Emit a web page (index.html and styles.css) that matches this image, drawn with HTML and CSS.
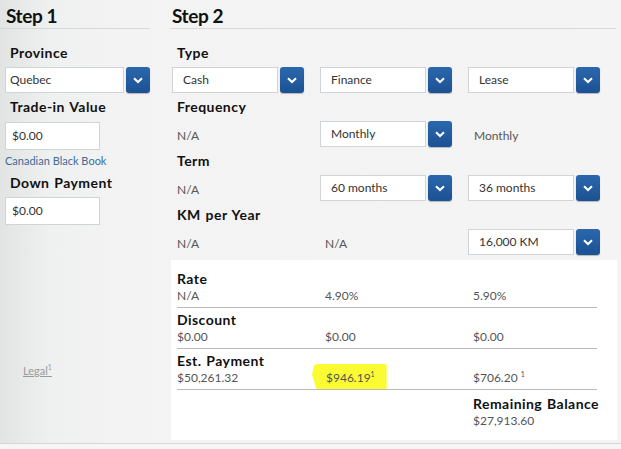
FILE: index.html
```html
<!DOCTYPE html>
<html lang="en">
<head>
  <meta charset="UTF-8">
  <meta name="viewport" content="width=device-width, initial-scale=1.0">
  <link rel="stylesheet" href="styles.css">
  <title>Payment Calculator</title>
</head>
<body>

<div id="calculator">
  <section class="step step-one">
    <h2 class="step-title">Step 1</h2>

    <div class="field-label first">Province</div>
    <div class="select wide">
      <span class="select-value">Quebec</span>
      <span class="select-btn"><svg width="10" height="7" viewBox="0 0 10 7"><path d="M1 1.2 5 5 9 1.2" fill="none" stroke="#fff" stroke-width="2"/></svg></span>
    </div>

    <div class="field-label">Trade-in Value</div>
    <div class="text-input">$0.00</div>
    <a class="book-link">Canadian Black Book</a>

    <div class="field-label down">Down Payment</div>
    <div class="text-input">$0.00</div>

    <a class="legal">Legal<sup>1</sup></a>
  </section>

  <section class="step step-two">
    <h2 class="step-title">Step 2</h2>

    <div class="field-label first">Type</div>
    <div class="opt-row">
      <div class="select"><span class="select-value">Cash</span><span class="select-btn"><svg width="10" height="7" viewBox="0 0 10 7"><path d="M1 1.2 5 5 9 1.2" fill="none" stroke="#fff" stroke-width="2"/></svg></span></div>
      <div class="select"><span class="select-value">Finance</span><span class="select-btn"><svg width="10" height="7" viewBox="0 0 10 7"><path d="M1 1.2 5 5 9 1.2" fill="none" stroke="#fff" stroke-width="2"/></svg></span></div>
      <div class="select"><span class="select-value">Lease</span><span class="select-btn"><svg width="10" height="7" viewBox="0 0 10 7"><path d="M1 1.2 5 5 9 1.2" fill="none" stroke="#fff" stroke-width="2"/></svg></span></div>
    </div>

    <div class="field-label">Frequency</div>
    <div class="opt-row">
      <div class="plain">N/A</div>
      <div class="select"><span class="select-value">Monthly</span><span class="select-btn"><svg width="10" height="7" viewBox="0 0 10 7"><path d="M1 1.2 5 5 9 1.2" fill="none" stroke="#fff" stroke-width="2"/></svg></span></div>
      <div class="plain shifted">Monthly</div>
    </div>

    <div class="field-label">Term</div>
    <div class="opt-row">
      <div class="plain">N/A</div>
      <div class="select"><span class="select-value">60 months</span><span class="select-btn"><svg width="10" height="7" viewBox="0 0 10 7"><path d="M1 1.2 5 5 9 1.2" fill="none" stroke="#fff" stroke-width="2"/></svg></span></div>
      <div class="select"><span class="select-value">36 months</span><span class="select-btn"><svg width="10" height="7" viewBox="0 0 10 7"><path d="M1 1.2 5 5 9 1.2" fill="none" stroke="#fff" stroke-width="2"/></svg></span></div>
    </div>

    <div class="field-label">KM per Year</div>
    <div class="opt-row">
      <div class="plain">N/A</div>
      <div class="plain">N/A</div>
      <div class="select"><span class="select-value">16,000 KM</span><span class="select-btn"><svg width="10" height="7" viewBox="0 0 10 7"><path d="M1 1.2 5 5 9 1.2" fill="none" stroke="#fff" stroke-width="2"/></svg></span></div>
    </div>

    <div class="results">
      <div class="result-row">
        <div class="result-label">Rate</div>
        <div class="result-values">
          <span>N/A</span><span>4.90%</span><span>5.90%</span>
        </div>
      </div>
      <div class="result-row">
        <div class="result-label">Discount</div>
        <div class="result-values">
          <span>$0.00</span><span>$0.00</span><span>$0.00</span>
        </div>
      </div>
      <div class="result-row">
        <div class="result-label">Est. Payment</div>
        <div class="result-values">
          <span>$50,261.32</span>
          <span><mark class="highlight">$946.19<sup>1</sup></mark></span>
          <span>$706.20 <sup>1</sup></span>
        </div>
      </div>
      <div class="result-row last">
        <div class="result-values">
          <span></span><span></span>
          <span><b class="result-label">Remaining Balance</b>$27,913.60</span>
        </div>
      </div>
    </div>
  </section>
</div>

</body>
</html>
```

FILE: styles.css
```css
body {
  margin: 0;
  font-family: 'Lato', 'Liberation Sans', sans-serif;
  background-color: #f6f6f6;
  color: #111;
}

#calculator {
  display: flex;
  height: 443px;
  border-bottom: 1px solid #d6d6d6;
  background: linear-gradient(to right, #e2e4e4 0, #eff0f0 50px, #f3f3f3 120px, #f4f4f4 100%);
}

.step-title {
  margin: 0;
  padding-top: 4px;
  height: 24px;
  line-height: 24px;
  font-size: 19px;
  font-weight: bold;
  letter-spacing: -0.4px;
  border-bottom: 1px solid #d8d8d8;
}

/* step 1 */

.step-one {
  width: 150px;
}

.step-one .step-title {
  padding-left: 6px;
}

.field-label {
  height: 28px;
  line-height: 28px;
  padding-left: 10px;
  font-size: 14px;
  font-weight: bold;
  letter-spacing: 0.45px;
  word-spacing: 1px;
}

.field-label.first {
  margin-top: 10px;
}

.select {
  display: flex;
  gap: 2px;
  width: 132px;
  height: 26px;
}

.select.wide {
  width: 145px;
  margin-left: 5px;
}

.select-value {
  flex: 1;
  background-color: #fff;
  border: 1px solid #cfd4d8;
  padding-left: 10px;
  font-size: 12px;
  line-height: 24px;
  color: #333;
}

.select.wide .select-value {
  padding-left: 4px;
}

.select-btn {
  width: 24px;
  display: flex;
  align-items: center;
  justify-content: center;
  border-radius: 3px;
  background: linear-gradient(#2b67ad, #1c5193);
  box-shadow: 0 1px 1px rgba(0, 0, 0, 0.25);
}

.text-input {
  width: 87px;
  height: 26px;
  margin: 1px 0 0 5px;
  padding-left: 6px;
  background-color: #fff;
  border: 1px solid #cfd4d8;
  font-size: 12px;
  line-height: 26px;
  color: #333;
}

.book-link {
  display: block;
  margin: 2px 0 0 5px;
  font-size: 11px;
  line-height: 18px;
  color: #3f6c98;
}

.field-label.down {
  height: 26px;
  line-height: 26px;
}

.legal {
  display: block;
  margin: 135px 0 0 23px;
  font-size: 11px;
  line-height: 14px;
  color: #999;
  text-decoration: underline;
}

.legal sup {
  font-size: 7px;
}

/* step 2 */

.step-two {
  margin-left: 20px;
  width: 446px;
}

.step-two .step-title {
  padding-left: 2px;
}

.step-two .field-label {
  padding-left: 7px;
}

.opt-row {
  display: grid;
  grid-template-columns: repeat(3, 148px);
  height: 26px;
  padding-left: 2px;
}

.plain {
  padding-left: 5px;
  font-size: 12px;
  line-height: 30px;
  color: #555;
}

.plain.shifted {
  padding-left: 6px;
}

.results {
  position: relative;
  z-index: 0;
  margin: 5px 0 0 1px;
  width: 440px;
  height: 173px;
  padding: 7px 0 0 6px;
  background-color: #fff;
}

.result-row {
  width: 420px;
  padding: 3px 0;
  border-bottom: 1px solid #bbb;
}

.result-row.last {
  border-bottom: none;
  padding-top: 5px;
}

.result-label {
  display: block;
  font-size: 14px;
  font-weight: bold;
  line-height: 18px;
  letter-spacing: 0.45px;
  word-spacing: 1px;
  color: #111;
}

.result-values {
  display: grid;
  grid-template-columns: repeat(3, 148px);
  font-size: 12px;
  line-height: 16px;
  color: #555;
}

.result-values sup {
  font-size: 7px;
  vertical-align: 5px;
  line-height: 0;
}

.highlight {
  position: relative;
  margin-left: 1px;
  background: none;
  color: #555;
}

.highlight::before {
  content: '';
  position: absolute;
  left: -14px;
  right: -12px;
  top: -6px;
  bottom: -5px;
  z-index: -1;
  background-color: #fbfb33;
  border-radius: 6px 2px 2px 3px;
  clip-path: polygon(3% 0, 100% 0, 100% 100%, 6% 96%, 0 40%);
}
```
